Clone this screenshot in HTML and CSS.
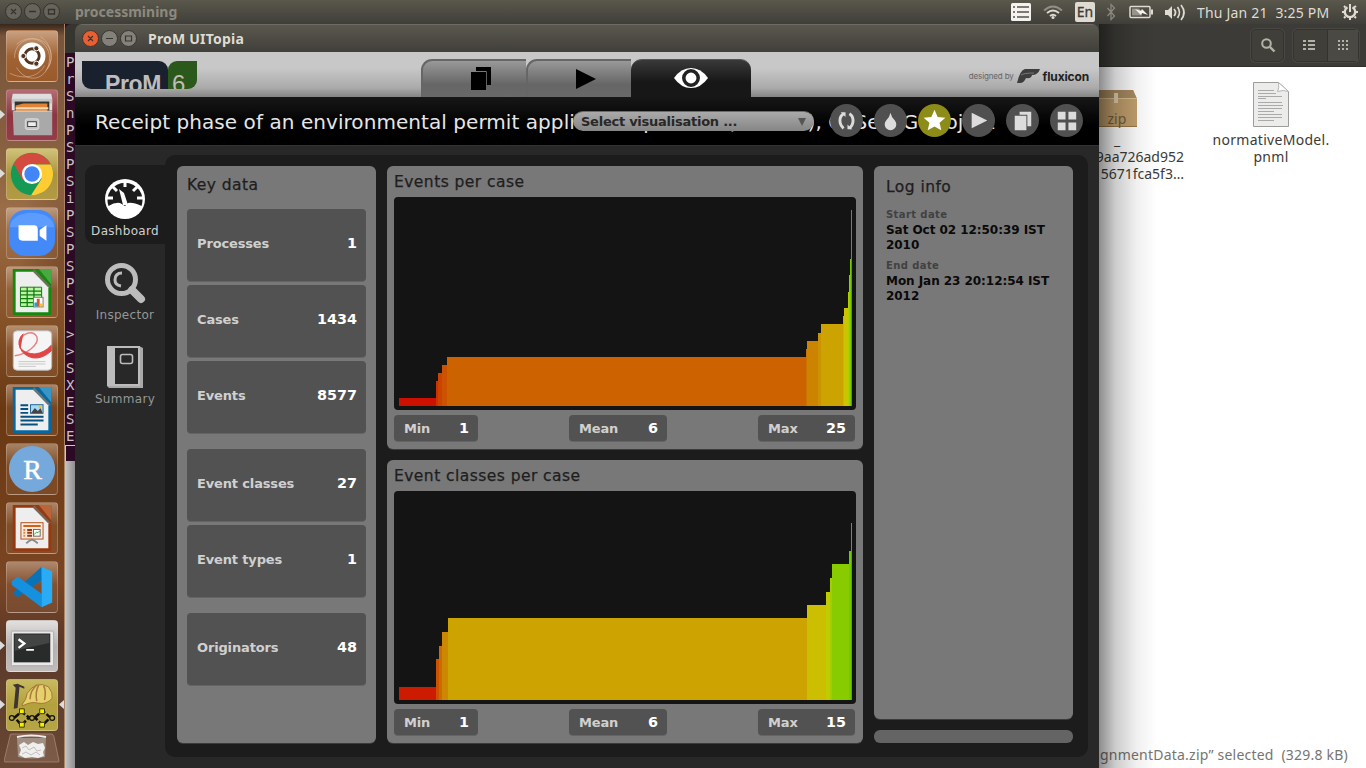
FILE: index.html
```html
<!DOCTYPE html>
<html lang="en">
<head>
<meta charset="utf-8">
<title>ProM UITopia</title>
<link rel="stylesheet" href="styles.css">
</head>
<body>
<div class="desktop">

  <header class="menubar">
    <svg class="wm" width="56" height="24" viewBox="0 0 56 24"><g fill="#66645b" stroke="#34332e"><circle cx="9.500" cy="11.500" r="8"/><circle cx="28.500" cy="11.500" r="8"/><circle cx="47.500" cy="11.500" r="8"/></g><path d="M7 9l5 5M12 9l-5 5M25 11.500h7M44.500 9.500h6v4.500h-6z" fill="none" stroke="#34332e" stroke-width="1.300"/></svg>
    <span class="app-name">processmining</span>
    <svg class="tray" width="190" height="24" viewBox="1010 0 190 24">
      <rect x="1011" y="3" width="20" height="18" rx="1.500" fill="#f4f2ee"/>
      <path d="M1013 7h2M1013 12h2M1013 17h2M1017 7h12M1017 12h12M1017 17h12" stroke="#55534b" stroke-width="1.400"/>
      <g fill="none" stroke="#dfdbd2" stroke-width="1.900"><path d="M1044 10.500q9-8 18 0" opacity=".45"/><path d="M1047 13q6-5 12 0M1050 16q3-2.500 6 0"/></g><circle cx="1053" cy="17.500" r="1.500" fill="#dfdbd2"/>
      <rect x="1075" y="2" width="20" height="20" rx="2" fill="#dfdbd2"/><text x="1085" y="17" class="lang" text-anchor="middle">En</text>
      <path d="M1107.500 8l7 8-3.500 3.500v-15l3.500 3.500-7 8" fill="none" stroke="#8a887e" stroke-width="1.300"/>
      <rect x="1130" y="6.500" width="20" height="11" rx="1" fill="none" stroke="#dfdbd2" stroke-width="1.500"/><rect x="1151" y="9.500" width="2" height="5" fill="#dfdbd2"/><path d="M1132 8.500h7l2 2 1 5h-10z" fill="#96948b"/><path d="M1135 9l6 2 1-2 6 6-6-2-1 2z" fill="#f5f3ef"/>
      <path d="M1165 10h3l4-4v13l-4-4h-3z" fill="#dfdbd2"/><path d="M1174 9q3 3.500 0 7M1177.500 7q4 5.500 0 11M1181 5q6 7.500 0 15" stroke="#dfdbd2" stroke-width="1.700" fill="none"/>
    </svg>
    <span class="clock">Thu Jan 21&nbsp; 3:25 PM</span>
    <svg class="gear" width="18" height="18" viewBox="-9 -9 18 18"><g stroke="#dfdbd2" fill="none"><path d="M-2.500-4.700A5.200 5.200 0 1 0 2.500-4.700" stroke-width="2.300"/><path d="M0-8V0" stroke-width="2"/><path d="M6 0h2M4-4.500l2-1.500M4.500 4.500l1.500 1.500M0 6v2M-4.500 4.500l-1.500 1.500M-6 0h-2M-4.500-4.500l-1.500-1.500" stroke-width="2"/></g></svg>
  </header>

  <nav class="launcher">
    <svg class="tile t-ubuntu" viewBox="0 0 52 52"><g fill="none" stroke="#e4c5aa" opacity=".55"><path d="M8 28C7 13 23 4 36 10s12 25 4 31M10 14C25 0 47 12 44 32S20 55 10 38M3 44c14 7 30 4 36-8M35 6c10 6 15 22 7 33"/></g><circle cx="26" cy="26" r="14" fill="#fff"/><circle cx="26" cy="26" r="7.500" fill="none" stroke="#54341f" stroke-width="3"/><g fill="#54341f" stroke="#fff" stroke-width="1"><circle cx="17" cy="26" r="2.700"/><circle cx="30.500" cy="18" r="2.700"/><circle cx="30.500" cy="34" r="2.700"/></g></svg>
    <svg class="tile t-files" viewBox="0 0 52 52"><path d="M6 4h40l1 5v12H5V9z" fill="#dedede"/><path d="M5 9h42v5H5z" fill="#c6c6c6"/><rect x="8" y="12" width="36" height="13" fill="#34322e"/><path d="M9 16l8-2h25v9H9z" fill="#df8435"/><path d="M9 19h34" stroke="#fbd8ad" stroke-width="2"/><path d="M6 22h41v25H7z" fill="#a9a9a9"/><path d="M7 22h40" stroke="#ddd"/><rect x="19" y="30" width="14" height="11" rx="2" fill="#c5c5c5" stroke="#ddd"/><rect x="21.500" y="33" width="9" height="5" fill="#eee" stroke="#3b3b3b"/></svg>
    <svg class="tile t-chrome" viewBox="0 0 52 52"><circle cx="26" cy="26" r="22" fill="#159a56"/><path d="M7 15A22 22 0 0 1 45.500 16H26L16 32z" fill="#d34a3e"/><path d="M26 16h19.500A22 22 0 0 1 25 48l11-17z" fill="#fc3"/><circle cx="26" cy="26" r="10.500" fill="#fff"/><circle cx="26" cy="26" r="8" fill="#4285f4"/></svg>
    <svg class="tile" viewBox="0 0 52 52"><rect x="2" y="2" width="48" height="48" rx="17" fill="#4389f8"/><path d="M3 20C4 0 48 0 49 20z" fill="#5d9cff"/><path d="M12 18h16q4 0 4 4v12H16q-4 0-4-4zM34 23l7-5v16l-7-5z" fill="#fff"/></svg>
    <svg class="tile" viewBox="0 0 52 52"><path d="M6 2h40v46q0 2-2 2H8q-2 0-2-2z" fill="#15890d"/><path d="M33 2h13v16z" fill="#48a942"/><path d="M9 5h19l15 16v26H9z" fill="#eee"/><path d="M28 2l18 19-3 0L27 5z" fill="#6b7458"/><path d="M14 21h22v20H14z" fill="#baf4a7" stroke="#107b0a"/><path d="M14 25h22M14 29h22M14 33h22M14 37h22M21 21v20M28 21v20" stroke="#107b0a" stroke-width="1.300"/><rect x="27.500" y="31.500" width="10" height="10" fill="#fff" stroke="#777"/><path d="M30 41v-4" stroke="#16a0e8" stroke-width="3"/><path d="M32.500 41v-8" stroke="#db581e" stroke-width="3"/><path d="M35.500 41v-3" stroke="#fbc12c" stroke-width="3"/></svg>
    <svg class="tile" viewBox="0 0 52 52"><rect x="6.500" y="5" width="40" height="41" rx="4" fill="#f5f5f5" stroke="#bbb"/><path d="M8 31C20 29 34 20 31 11Q27 4 18 9 10 15 14 23" fill="none" stroke="#e88080" stroke-width="1.500"/><path d="M14 24Q10 14 17 8M14 23q5 6 15 6 10-1 17-9v6q-10 9-20 7-10-3-12-10z" fill="#e04646" stroke="#e04646"/><path d="M12 37h28M12 39.500h28M12 42h18" stroke="#c8c8c8"/></svg>
    <svg class="tile" viewBox="0 0 52 52"><path d="M6 2h40v46q0 2-2 2H8q-2 0-2-2z" fill="#0568a2"/><path d="M33 2h13v16z" fill="#3896c6"/><path d="M9 5h19l15 16v26H9z" fill="#eee"/><path d="M28 2l18 19h-3L27 5z" fill="#65777a"/><path d="M14 21h8M14 25h8M14 29h8M14 33h24M14 37h24M14 41h18" stroke="#065080" stroke-width="2"/><rect x="24.500" y="20.500" width="13" height="9" fill="#a9d9f4" stroke="#1a6593"/><path d="M25 29l4-5 3 3 3-3 2 5z" fill="#444"/><circle cx="34.500" cy="23" r="1.500" fill="#f6bf20"/></svg>
    <svg class="tile" viewBox="0 0 52 52"><circle cx="26" cy="26" r="24" fill="#75a9db"/><text x="26.500" y="36" class="r-mark" text-anchor="middle">R</text></svg>
    <svg class="tile" viewBox="0 0 52 52"><path d="M6 2h40v46q0 2-2 2H8q-2 0-2-2z" fill="#96390e"/><path d="M33 2h13v16z" fill="#ba643a"/><path d="M9 5h19l15 16v26H9z" fill="#eee"/><path d="M28 2l18 19h-3L27 5z" fill="#7b6354"/><rect x="14.500" y="20.500" width="23" height="17" fill="#fbe9da" stroke="#b24e18"/><path d="M17 24h18" stroke="#d36118" stroke-width="2"/><path d="M17 28h2M17 31h2M17 34h2" stroke="#df865a" stroke-width="2"/><path d="M21 28h5M21 31h5M21 34h5" stroke="#913a14" stroke-width="2"/><rect x="27.500" y="27.500" width="7" height="7" fill="#fff" stroke="#666"/><path d="M28 33l3-3 1 1 2-2" stroke="#28a628" fill="none"/><path d="M20 42q3-3 6-4 3 1 6 4" stroke="#888" stroke-width="2" fill="none"/></svg>
    <svg class="tile" viewBox="0 0 52 52"><path d="M6 32L36 5v14L11 37z" fill="#0873b8"/><path d="M5 20l6-5 25 18v14L5 24z" fill="#1591df"/><path d="M36 5l11 5v32l-11 5z" fill="#29acf5"/></svg>
    <svg class="tile t-term" viewBox="0 0 52 52"><rect x="4.500" y="10.500" width="44" height="36" rx="1" fill="#e9e9e9" stroke="#aaa"/><rect x="7" y="13" width="38" height="30" fill="#292b2a"/><path d="M8 14h36v9Q25 27 8 31z" fill="#434544"/><path d="M12 19l6 4.500-6 4.500" fill="none" stroke="#fff" stroke-width="2.400"/><path d="M20 30h8" stroke="#fff" stroke-width="2"/></svg>
    <svg class="tile t-prom" viewBox="0 0 52 52"><path d="M6 5l5-1 7 3v2l-5-2-2 22-4 1 2-22z" fill="#3e3533"/><path d="M16 25q4-4 5-11Q30 0 43 7q5 6 4 12-6 7-15 5-7-2-16 3z" fill="#e5d069" stroke="#a1743a"/><path d="M24 20q0-9 7-15M31 22q-2-9 2-17M39 21q2-10-1-15" fill="none" stroke="#aa7b42" stroke-width="1.600"/><path d="M8 39l7-6 8 6-8 8zM29 39l8-7 8 7-8 8z" fill="none" stroke="#111" stroke-width="2.600" stroke-dasharray="6 2"/><g fill="#b9a642" stroke="#111" stroke-width="1.300"><circle cx="5" cy="39.500" r="2.500"/><circle cx="26" cy="39.500" r="2.500"/><circle cx="47" cy="39.500" r="2.500"/></g><path d="M13 30h5v5h-5zM34 30h5v5h-5zM13 44h5v5h-5zM34 44h5v5h-5z" fill="#f5f000" stroke="#393600"/></svg>
    <svg class="trash" viewBox="0 0 56 30" width="56" height="30"><path d="M7 1h41q1 0 2 3l5 24q0 1-1 1H1q-1 0-1-1L6 3q0-2 1-2z" fill="#b69682" fill-opacity=".25" stroke="#b69b8b" stroke-opacity=".6"/><path d="M13 5h29l-1 19q-13 3-27 0z" fill="#b5aca5" opacity=".65"/><path d="M15 12l5-3 4 3 5-3 5 2 5-1 2 5-2 4 1 4-6 2-6-1-7 1-6-3 2-5z" fill="#f0efed"/><path d="M18 15l4-2 3 4 5-3 3 4 4-1M18 21l4-2 5 3 5-3 4 3" stroke="#c0bfbd" fill="none"/><path d="M13 4q14-3 29 0" stroke="#eee" stroke-width="2" fill="none"/></svg>
    <svg class="pips" width="65" height="744" viewBox="0 24 65 744"><path d="M0 110v9l5-4.500zM0 169v9l5-4.500zM0 641v9l5-4.500zM0 700v9l5-4.500zM64 700v9l-5-4.500z" fill="#dcdcdc"/></svg>
  </nav>

  <section class="files-window">
    <div class="files-bar">
      <span class="tool-btn"><svg width="16" height="16" viewBox="0 0 16 16"><circle cx="6.500" cy="6.500" r="4.300" fill="none" stroke="#b5b2a7" stroke-width="2"/><path d="M10 10l4.500 4.500" stroke="#b5b2a7" stroke-width="2.400"/></svg></span>
      <span class="tool-group">
        <span class="seg"><svg width="12" height="10" viewBox="0 0 12 10"><path d="M0 1h3M5 1h7M0 5h3M5 5h7M0 9h3M5 9h7" stroke="#b5b2a7" stroke-width="2"/></svg></span>
        <span class="seg seg-on"><svg width="10" height="10" viewBox="0 0 10 10"><path d="M0 1h10M0 5h10M0 9h10" stroke="#b5b2a7" stroke-width="2" stroke-dasharray="2 2"/></svg></span>
      </span>
    </div>
    <div class="files-view">
      <figure class="file file-zip">
        <svg width="72" height="48" viewBox="0 0 72 48"><path d="M10 7h51l4 9v28H2V16z" fill="#c3a16e"/><path d="M10 7h51l4 9H2z" fill="#a98b61"/><path d="M2 15.500h63" stroke="#dfc293"/><path d="M42 10h4v10h-4z" fill="#e2d0af"/><path d="M2 43.500h63" stroke="#987844"/><text x="35.500" y="41" class="zip-label">zip</text></svg>
        <figcaption><span>_</span><span>9aa726ad952</span><span>5671fca5f3…</span></figcaption>
      </figure>
      <figure class="file file-model">
        <svg width="38" height="48" viewBox="0 0 38 48"><path d="M1.500 1.500h25l10 9v35h-35z" fill="#ececea" stroke="#9c9c9a"/><path d="M26.500 1.500q1 6-1 9 6-2 11 0z" fill="#fff" stroke="#b5b5b3"/><path d="M6 9.500h16M6 12.500h18M6 15.500h24M6 17.500h8M6 21.500h24M6 24.500h25M6 27.500h24M6 30.500h16M6 33.500h24M6 36.500h24M6 39.500h16" stroke="#aaa"/></svg>
        <figcaption><span>normativeModel.</span><span>pnml</span></figcaption>
      </figure>
      <p class="status">gnmentData.zip” selected&nbsp; (329.8 kB)</p>
    </div>
  </section>

  <section class="terminal"><div class="terminal-bar"></div><pre class="terminal-text">P
r
S
n
P
S
P
S
i
P
S
P
S
P
S
.
&gt;
&gt;
S
X
E
S
E</pre><div class="cursor"></div></section>

  <main class="prom">
    <div class="titlebar">
      <svg width="56" height="28" viewBox="0 0 56 28"><circle cx="9.500" cy="13.500" r="8" fill="#e95f31" stroke="#45352e"/><circle cx="28.500" cy="13.500" r="8" fill="#83817a" stroke="#36352f"/><circle cx="47.500" cy="13.500" r="8" fill="#83817a" stroke="#36352f"/><path d="M7 11l5 5M12 11l-5 5M25 13.500h7M44.500 11h6v5h-6z" fill="none" stroke="#373630" stroke-width="1.200"/></svg>
      <span>ProM UITopia</span>
    </div>
    <div class="brandbar">
      <div class="prom-logo"><span class="logo-name">ProM</span><span class="logo-ver">6</span></div>
      <div class="tabs">
        <div class="tab"><svg width="22" height="24" viewBox="0 0 22 24"><path d="M6 0h15v18h-5V4H6z"/><path d="M1 5h15v18H1z"/><path d="M6 4.500h10.500V18" fill="none" stroke="#777" stroke-width=".8"/></svg></div>
        <div class="tab"><svg width="22" height="22" viewBox="0 0 22 22"><path d="M1 1l20 10L1 21z"/></svg></div>
        <div class="tab tab-on"><svg width="36" height="22" viewBox="0 0 36 22"><path d="M1 11Q8 1 18 1t17 10Q28 21 18 21T1 11z" fill="#fff"/><circle cx="18" cy="11" r="7.200" fill="none" stroke="#222" stroke-width="3.500"/></svg></div>
      </div>
      <div class="credit"><span class="credit-by">designed by</span><svg width="25" height="18" viewBox="0 0 25 18"><path d="M1 16Q4 3 9 2h15q-2 6-8 6-1 4-6 3-2 5-6 5z" fill="#3d3d3d"/><path d="M5 8q3-2 13-2" stroke="#777" fill="none"/></svg><b>fluxicon</b></div>
    </div>

    <div class="actionbar">
      <h1>Receipt phase of an environmental permit application process ('WABO'), CoSeLoG project</h1>
      <div class="visual-select"><span>Select visualisation ...</span><i></i></div>
      <div class="actions">
        <span class="act"><svg viewBox="-17 -17 34 34"><path d="M-3-7C-8-4-8 4-3 8M3 8C8 4 8-4 3-7" fill="none" stroke="#dcdcdc" stroke-width="3"/><path d="M-6-8.500h5v5zM6 9H1V4z" fill="#dcdcdc"/></svg></span>
        <span class="act"><svg viewBox="-17 -17 34 34"><path d="M0-8Q1-3 4.500 0A6 6 0 1 1-4.500 0Q-1-3 0-8z" fill="#dcdcdc"/></svg></span>
        <span class="act act-on"><svg viewBox="-17 -17 34 34"><path d="M0-11l3.300 7.300 7.900.8-6 5.200L7 10 0 6.200-7 10l1.800-7.700-6-5.200 7.900-.8z" fill="#fff"/></svg></span>
        <span class="act"><svg viewBox="-17 -17 34 34"><path d="M-7-8L9 0-7 8z" fill="#dcdcdc"/></svg></span>
        <span class="act"><svg viewBox="-17 -17 34 34"><path d="M-3-9H9V6H5V-6h-8z" fill="#dcdcdc"/><path d="M-8-5H4V10H-8z" fill="#dcdcdc"/></svg></span>
        <span class="act"><svg viewBox="-17 -17 34 34"><path d="M-9-9h8v8h-8zM2-9h8v8H2zM-9 2h8v8h-8zM2 2h8v8H2z" fill="#dcdcdc"/></svg></span>
      </div>
    </div>

    <div class="workspace">
      <aside class="views">
        <div class="view view-on"><svg width="42" height="42" viewBox="-21 -21 42 42"><circle r="20" fill="#fff"/><path d="M-16.500 7A17.500 17.500 0 1 1 16.500 7Q8 3 3 4L0 7-5 4Q-10 3-16.500 7z" fill="#1c1c1c"/><path d="M-6-10L-2 6H3L-1-6z" fill="#fff"/><path d="M0-18v6M-12-12l4 4M12-12l-4 4M-18-1h6M18-1h-6" stroke="#fff" stroke-width="3"/></svg><span>Dashboard</span></div>
        <div class="view"><svg width="42" height="42" viewBox="0 0 42 42"><circle cx="17.500" cy="17.500" r="14" fill="none" stroke="#bcbcbc" stroke-width="5"/><path d="M28 28l9 9" stroke="#bcbcbc" stroke-width="8" stroke-linecap="round"/><path d="M18 11q-7 0-7 7 0 5 6 6" fill="none" stroke="#bcbcbc" stroke-width="3"/></svg><span>Inspector</span></div>
        <div class="view"><svg width="42" height="44" viewBox="0 1 42 44"><path d="M3 1h32l4 2v40H5l-2-2z" fill="#a9a9a9"/><path d="M3 1h33v40H3z" fill="#bcbcbc"/><path d="M11 3h23v36H11z" fill="#282828"/><rect x="16.500" y="9.500" width="12" height="9" rx="2" fill="none" stroke="#bcbcbc" stroke-width="1.600"/></svg><span>Summary</span></div>
      </aside>

      <div class="board">
        <section class="panel key-data">
          <h2>Key data</h2>
          <dl>
            <div class="card"><dt>Processes</dt><dd>1</dd></div>
            <div class="card"><dt>Cases</dt><dd>1434</dd></div>
            <div class="card"><dt>Events</dt><dd>8577</dd></div>
            <div class="card card-gap"><dt>Event classes</dt><dd>27</dd></div>
            <div class="card"><dt>Event types</dt><dd>1</dd></div>
            <div class="card card-gap"><dt>Originators</dt><dd>48</dd></div>
          </dl>
        </section>

        <div class="charts">
          <section class="panel chart">
            <h2>Events per case</h2>
            <svg class="plot" width="462" height="213" viewBox="394 197 462 213" shape-rendering="crispEdges">
              <path d="M399 398h37v8h-37z" fill="#cc1100"/><path d="M436 381h2v25h-2z" fill="#cc3100"/><path d="M438 373h4v33h-4z" fill="#cc4200"/><path d="M442 365h5v41h-5z" fill="#cc5200"/>
              <path d="M447 357h359v49H447z" fill="#cc6300"/><path d="M806 349h1v57h-1z" fill="#cc7200"/><path d="M807 341h11v65h-11z" fill="#cc8300"/><path d="M818 333h3v73h-3z" fill="#cc9300"/>
              <path d="M821 324h22v82h-22z" fill="#cca300"/><path d="M843 316h1v90h-1z" fill="#ccb400"/><path d="M844 308h4v98h-4z" fill="#ccc400"/><path d="M848 292h1v114h-1z" fill="#b3cc00"/><path d="M849 275h1v131h-1z" fill="#96cc00"/><path d="M850 259h1v147h-1z" fill="#75cc00"/><path d="M851 210h1v196h-1z" fill="#22b80f"/>
            </svg>
            <dl class="stats"><div class="stat s-min"><dt>Min</dt><dd>1</dd></div><div class="stat s-mean"><dt>Mean</dt><dd>6</dd></div><div class="stat s-max"><dt>Max</dt><dd>25</dd></div></dl>
          </section>
          <section class="panel chart">
            <h2>Event classes per case</h2>
            <svg class="plot" width="462" height="213" viewBox="394 491 462 213" shape-rendering="crispEdges">
              <path d="M399 687h37v13h-37z" fill="#cc1b00"/><path d="M436 659h3v41h-3z" fill="#cc5200"/><path d="M439 646h3v54h-3z" fill="#cc6c00"/><path d="M442 632h6v68h-6z" fill="#cc8800"/>
              <path d="M448 618h359v82H448z" fill="#cca300"/><path d="M807 605h19v95h-19z" fill="#ccbe00"/><path d="M826 592h4v108h-4z" fill="#bfcc00"/><path d="M830 578h2v122h-2z" fill="#a4cc00"/>
              <path d="M832 564h17v136h-17z" fill="#88cc00"/><path d="M849 551h2v149h-2z" fill="#6dcc00"/><path d="M851 523h1v177h-1z" fill="#36b814"/>
            </svg>
            <dl class="stats"><div class="stat s-min"><dt>Min</dt><dd>1</dd></div><div class="stat s-mean"><dt>Mean</dt><dd>6</dd></div><div class="stat s-max"><dt>Max</dt><dd>15</dd></div></dl>
          </section>
        </div>

        <div class="info-col">
          <section class="panel log-info">
            <h2>Log info</h2>
            <h3>Start date</h3><p>Sat Oct 02 12:50:39 IST<br>2010</p>
            <h3>End date</h3><p>Mon Jan 23 20:12:54 IST<br>2012</p>
          </section>
          <div class="info-foot"></div>
        </div>
      </div>
    </div>
  </main>
</div>
</body>
</html>
```
FILE: styles.css
```css
* { box-sizing: border-box; }
body, h1, h2, h3, p, dl, dd, figure, pre { margin: 0; }
body { overflow: hidden; font-family: "Noto Sans", sans-serif; }
svg { display: block; flex: none; }

.desktop { position: relative; width: 1366px; height: 768px; overflow: hidden; background: #fff; }

.menubar { position: absolute; inset: 0 0 auto; z-index: 5; height: 24px; display: flex; align-items: center; padding-left: 4px; background: linear-gradient(#5a584c, #3f3e39); color: #dfdbd2; }
.app-name { margin-left: 15px; width: 935px; font-size: 14px; font-weight: 700; color: #8c897e; line-height: 24px; }
.lang { font: 14px "Noto Sans", sans-serif; fill: #3c3b37; stroke: #3c3b37; stroke-width: .3px; }
.clock { margin-left: -3px; width: 144px; font-size: 14px; letter-spacing: .2px; white-space: nowrap; }

.launcher { position: absolute; left: 0; top: 24px; width: 65px; height: 744px; padding: 6px 0 0 6px; display: flex; flex-direction: column; gap: 7px; background: radial-gradient(ellipse 45px 90px at 100% 30%, rgba(60,24,5,.3), transparent), linear-gradient(#39271c 0, #77543b 12px, #87603f 16%, #9b6d48 25%, #8a562c 38%, #693811 52%, #73401b 66%, #7a4524 75%, #5c3928 83%, #684735 100%); border-right: 1px solid #a78566; }
.tile { width: 52px; height: 52px; border-radius: 4px; border: 1px solid rgba(235,215,200,.28); background: linear-gradient(rgba(255,240,225,.4), rgba(180,130,95,.2) 45%, rgba(180,130,95,.18)); }
.t-ubuntu { background: linear-gradient(#c9a182, #a16334 50%, #9a5a2c); }
.t-files { background: linear-gradient(#b56d73, #8c3640 50%, #943d49); }
.t-chrome { background: linear-gradient(#d0c37a, #ac943e 50%, #b39b45); }
.t-term { background: linear-gradient(#e2e0df, #b5b2b0 50%, #bfbcbb); }
.t-prom { background: linear-gradient(#c8ba60, #b3a13e 50%, #b5a544); }
.r-mark { font: 29px "Liberation Serif", serif; fill: #fff; stroke: #fff; stroke-width: .5px; }
.trash { margin: -5px 0 0 -2px; }
.pips { position: absolute; left: 0; top: 0; }

.files-window { position: absolute; left: 65px; top: 24px; width: 1301px; height: 744px; background: #fff; }
.files-bar { height: 43px; display: flex; justify-content: flex-end; align-items: center; gap: 9px; padding-right: 7px; background: #3c3b37; border-bottom: 1px solid #302f2c; }
.tool-btn, .tool-group { height: 33px; display: flex; align-items: center; justify-content: center; border: 1px solid #34332f; border-radius: 5px; background: #403f3a; box-shadow: 0 0 0 1px #484741; }
.tool-btn { width: 33px; }
.tool-group { width: 66px; }
.seg { flex: 1; height: 100%; display: flex; align-items: center; justify-content: center; }
.seg:first-child { padding-right: 3px; }
.seg-on { background: #4a4943; border-left: 1px solid #33322e; }
.files-view { position: relative; height: 701px; color: #3c3b37; }
.file { position: absolute; display: flex; flex-direction: column; align-items: center; font-size: 14px; line-height: 17px; }
.file span { display: block; text-align: center; }
.file-zip { left: 1007px; top: 16px; align-items: flex-start; }
.file-zip figcaption { width: 112px; }
.file-zip figcaption span { text-align: right; }
.file-zip figcaption span:first-child { text-align: center; padding-right: 22px; }
.file-model { left: 1141px; top: 14px; width: 130px; letter-spacing: .3px; }
.file-model figcaption { padding-top: 2px; }
.zip-label { font: 14px "Noto Sans", sans-serif; fill: #745e3c; }
.status { position: absolute; right: 18px; bottom: 4px; font-size: 14px; letter-spacing: .22px; line-height: 18px; color: #77756f; white-space: nowrap; }

.terminal { position: absolute; left: 65px; top: 24px; width: 20px; height: 437px; background: #2c0a25; color: #c8c2c6; overflow: hidden; }
.terminal-bar { height: 30px; background: linear-gradient(#363530 29px, #2c0a25 29px); border-radius: 6px 0 0; }
.terminal-text { padding-left: 1px; font: 14px/17px "DejaVu Sans Mono", monospace; height: 391px; }
.cursor { height: 17px; border: 1px solid #cfc9cd; }

.prom { position: absolute; left: 75px; top: 24px; width: 1024px; height: 744px; display: flex; flex-direction: column; background: #282828; border-radius: 7px 7px 0 0; overflow: hidden; font-family: "DejaVu Sans", sans-serif; }
.desktop::after { content: ""; position: absolute; z-index: 1; left: 1099px; top: 24px; width: 58px; height: 744px; background: linear-gradient(90deg, rgba(0,0,0,.45), rgba(0,0,0,.2) 28%, rgba(0,0,0,.06) 65%, transparent); }
.files-window::after { content: ""; position: absolute; left: 0; top: 437px; width: 10px; bottom: 0; background: linear-gradient(90deg, #c5c5c5, #8d8d8d); }

.titlebar { flex: none; height: 28px; display: flex; align-items: center; padding-left: 6px; gap: 11px; background: linear-gradient(#5a584e, #403f3a); border-top: 1px solid #6d6b62; color: #dfdbd2; font: 700 14px "Noto Sans", sans-serif; letter-spacing: .2px; }
.brandbar { position: relative; flex: none; height: 45px; display: flex; background: linear-gradient(#c8c8c8 0 35%, #aaa 80%, #858585); }
.prom-logo { width: 115px; height: 28px; margin: 9px 0 0 7px; display: flex; overflow: hidden; font: 24px/46px "Liberation Sans", sans-serif; color: #bdbdbd; }
.logo-name { width: 86px; padding-left: 23px; background: #1a212e; border-radius: 0 9px 0 9px; font-weight: 700; letter-spacing: -.4px; font-size: 23px; }
.logo-ver { width: 29px; padding-left: 4px; background: #2b581b; border-radius: 9px 0 9px 0; }
.tabs { display: flex; margin: 7px 0 0 224px; }
.tab { width: 105px; height: 38px; display: flex; align-items: center; justify-content: center; padding-left: 13px; background: linear-gradient(#999, #666 65%, #696969); border: 2px solid #666; border-width: 2px 0 0 2px; border-radius: 11px 0 0 0; }
.tab-on { width: 120px; padding-left: 0; background: linear-gradient(#393939, #171717 60%); border: 0; border-top: 1px solid #555; border-radius: 11px 11px 0 0; }
.tab-on svg { margin-left: -1px; margin-top: -1px; }
.credit { margin: 15px 10px 0 auto; height: 18px; display: flex; align-items: center; gap: 2px; font-family: Inter, sans-serif; color: #222; }
.credit-by { font-size: 8px; letter-spacing: -.15px; color: #666; white-space: nowrap; }
.credit b { font-size: 12px; letter-spacing: -.15px; }

.actionbar { position: relative; flex: none; height: 48px; padding: 1px 20px 0; display: flex; align-items: center; background: linear-gradient(#171717, #000 60%); }
.actionbar h1 { width: 930px; white-space: nowrap; font-size: 20px; letter-spacing: .06px; line-height: 30px; font-weight: 400; color: #e6e6e6; }
.visual-select { position: absolute; left: 498px; top: 14px; width: 241px; height: 20px; padding: 0 8px; display: flex; align-items: center; justify-content: space-between; border-radius: 10px; background: linear-gradient(#aaa, #858585); border-top: 1px solid #6b6b6b; color: #282828; font-size: 13px; letter-spacing: -.25px; font-weight: 700; }
.visual-select i { border: 4px solid transparent; border-top: 8px solid #555; border-bottom: 0; }
.actions { position: absolute; left: 755px; top: 7px; display: flex; gap: 11px; }
.act { width: 33px; height: 33px; border-radius: 50%; background: #505050; }
.act-on { background: #8d8c18; }

.workspace { flex: 1; display: flex; border-top: 1px solid #333; padding: 9px 11px 11px 10px; }
.views { width: 80px; padding-top: 10px; display: flex; flex-direction: column; gap: 5px; }
.view { height: 79px; display: flex; flex-direction: column; align-items: center; justify-content: space-between; padding: 13px 0 5px; color: #969696; font-size: 12px; letter-spacing: .3px; line-height: 16px; }
.view-on { background: #1c1c1c; border-radius: 10px 0 0 10px; color: #d0d0d0; }
.board { flex: 1; display: flex; gap: 11px; padding: 11px 15px 14px 12px; background: #1c1c1c; border-radius: 10px; }
.panel { background: #787878; border-radius: 6px; box-shadow: 0 1px 0 #3b3b3b; }
.panel h2 { font-size: 15.5px; letter-spacing: .45px; line-height: 20px; font-weight: 400; color: #1e1e1e; -webkit-text-stroke: .25px #1e1e1e; }

.key-data { width: 199px; padding: 9px 10px; }
.key-data dl { padding-top: 14px; display: flex; flex-direction: column; gap: 4px; }
.card, .stat { display: flex; align-items: center; justify-content: space-between; padding: 0 9px 0 10px; background: #525252; border-radius: 4px; box-shadow: 0 1px 0 #646464; font-weight: 700; font-size: 13px; letter-spacing: -.15px; color: #d0d0d0; }
.card { height: 72px; padding-bottom: 4px; }
.card-gap { margin-top: 12px; }
.card dd, .stat dd { font-size: 14.400px; letter-spacing: 0; color: #fff; }

.charts { width: 476px; display: flex; flex-direction: column; gap: 11px; }
.chart { height: 283px; padding: 6px 7px; }
.plot { margin-top: 5px; background: #141414; border-radius: 4px; }
.stats { display: flex; justify-content: space-between; margin-top: 5px; padding-right: 1px; }
.stat { height: 26px; }
.s-min { width: 84px; }
.s-mean { width: 98px; }
.s-max { width: 97px; }

.info-col { flex: 1; display: flex; flex-direction: column; gap: 11px; }
.log-info { flex: 1; padding: 11px 12px; }
.log-info h3 { margin-top: 5px; font-size: 10px; letter-spacing: .4px; line-height: 16px; color: #414141; }
.log-info h2 + h3 { margin-top: 10px; }
.log-info p { font-size: 12px; line-height: 15px; font-weight: 700; letter-spacing: -.05px; color: #0a0a0a; white-space: nowrap; }
.info-foot { height: 13px; border-radius: 6px; background: #646464; }
```
